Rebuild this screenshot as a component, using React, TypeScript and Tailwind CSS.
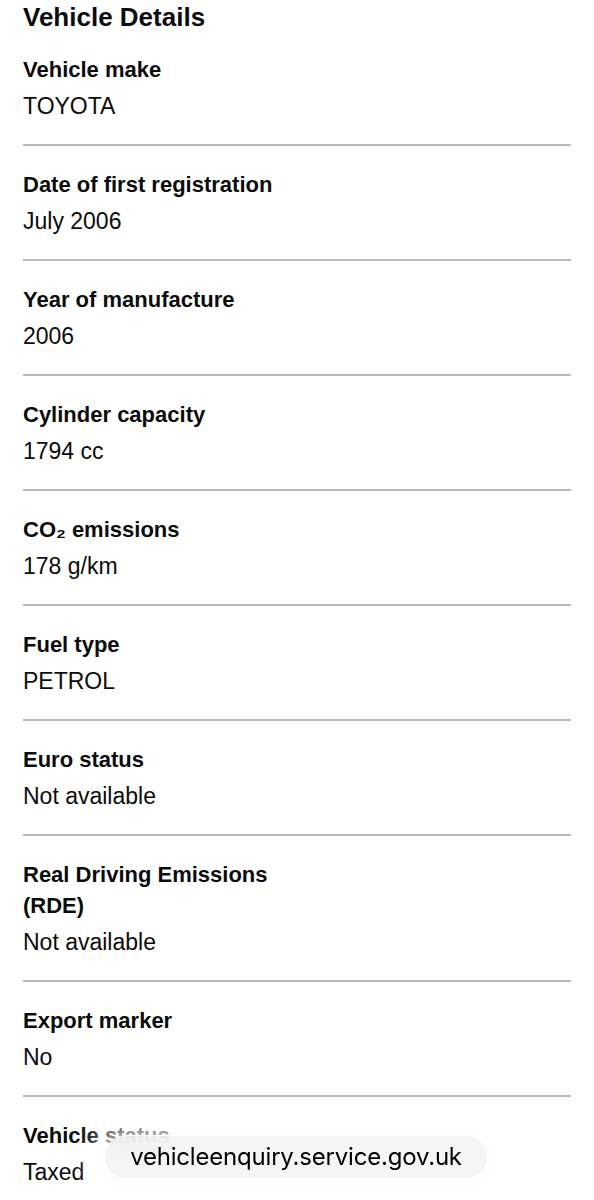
import React from 'react';

interface DetailRow {
    label: React.ReactNode;
    value: string;
}

const rows: DetailRow[] = [
    { label: 'Vehicle make', value: 'TOYOTA' },
    { label: 'Date of first registration', value: 'July 2006' },
    { label: 'Year of manufacture', value: '2006' },
    { label: 'Cylinder capacity', value: '1794 cc' },
    { label: <>CO₂ emissions</>, value: '178 g/km' },
    { label: 'Fuel type', value: 'PETROL' },
    { label: 'Euro status', value: 'Not available' },
    { label: <>Real Driving Emissions<br />(RDE)</>, value: 'Not available' },
    { label: 'Export marker', value: 'No' },
    { label: 'Vehicle status', value: 'Taxed' },
];

const App: React.FC = () => {
    return (
        <div className="min-h-[1200px] bg-white text-[#0b0c0c] font-['Liberation_Sans',Arial,sans-serif]">
            <div className="px-[23px]">
                <h1 className="text-[26px] leading-[34px] font-bold">Vehicle Details</h1>

                <dl className="pt-[20px]">
                    {rows.map((row, i) => (
                        <div
                            key={i}
                            className={`pb-[22px] border-b-2 border-[#b8b9ba] ${i === 0 ? '' : 'pt-[23px]'}`}
                        >
                            <dt className="text-[22px] leading-[31px] font-bold">{row.label}</dt>
                            <dd className="mt-[6px] text-[23px] leading-[31px]">{row.value}</dd>
                        </div>
                    ))}
                </dl>
            </div>

            {/* Safari address pill */}
            <div className="fixed left-[104px] bottom-[21px] w-[384px] h-[44px] rounded-full bg-[#f4f4f4]/90 backdrop-blur-md border border-white shadow-[0_0_28px_10px_rgba(255,255,255,0.85),0_2px_14px_rgba(0,0,0,0.06)] flex items-center justify-center">
                <span className="text-[24px] text-black font-['Inter',sans-serif] tracking-[-0.2px]">
                    vehicleenquiry.service.gov.uk
                </span>
            </div>
        </div>
    );
};

export default App;
